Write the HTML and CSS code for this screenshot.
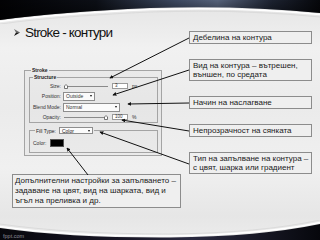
FILE: index.html
```html
<!DOCTYPE html>
<html lang="bg">
<head>
<meta charset="utf-8">
<title>Stroke - контури</title>
<link rel="stylesheet" href="styles.css">
</head>
<body>
<div class="slide">
  <svg class="band band-top" width="320" height="24" viewBox="0 0 320 24">
    <defs>
      <linearGradient id="gTop" x1="0" y1="0" x2="1" y2="0">
        <stop offset="0" stop-color="#020204"/>
        <stop offset="0.3" stop-color="#0c0f16"/>
        <stop offset="0.55" stop-color="#3c4860"/>
        <stop offset="0.68" stop-color="#56627a"/>
        <stop offset="0.85" stop-color="#1c2230"/>
        <stop offset="1" stop-color="#06070b"/>
      </linearGradient>
      <linearGradient id="gTopShade" x1="0" y1="0" x2="0" y2="1">
        <stop offset="0" stop-color="#000" stop-opacity="0"/>
        <stop offset="1" stop-color="#000" stop-opacity="0.6"/>
      </linearGradient>
    </defs>
    <path d="M0 0H320V13Q240 5 150 8Q60 12 0 20Z" fill="url(#gTop)"/>
    <path d="M0 0H320V13Q240 5 150 8Q60 12 0 20Z" fill="url(#gTopShade)"/>
    <path d="M0 21.5Q60 13.5 150 9.5Q240 6.5 320 14.5" fill="none" stroke="#ffffff" stroke-width="1.6"/>
    <path d="M0 24Q60 16 150 12Q240 9 320 17" fill="none" stroke="#d6d6d6" stroke-width="1.2" opacity="0.7"/>
  </svg>

  <svg class="band band-bottom" width="320" height="20" viewBox="0 220 320 20">
    <defs>
      <linearGradient id="gBot" x1="0" y1="0" x2="1" y2="0">
        <stop offset="0" stop-color="#07070c"/>
        <stop offset="0.4" stop-color="#1a1828"/>
        <stop offset="0.6" stop-color="#2a2a40"/>
        <stop offset="1" stop-color="#06070c"/>
      </linearGradient>
    </defs>
    <path d="M0 224Q70 234 170 234Q260 233 320 220" fill="none" stroke="#d4d4d4" stroke-width="1" opacity="0.7"/>
    <path d="M0 226.5Q70 236.5 170 236Q260 235 320 222.5" fill="none" stroke="#ffffff" stroke-width="1.6"/>
    <path d="M0 228Q70 238 170 237.5Q260 236.5 320 224V240H0Z" fill="url(#gBot)"/>
    <text class="brand" x="3" y="237.5">fppt.com</text>
  </svg>

  <div class="layout">
    <div class="left">
      <h1 class="title">
        <svg class="bullet" width="6" height="7" viewBox="0 0 6 7">
          <path d="M0 0L6 3.5L2 3.5Z" fill="#6a6a6a"/>
          <path d="M0 7L6 3.5L2 3.5Z" fill="#111"/>
        </svg>
        <span>Stroke - контури</span>
      </h1>

      <fieldset class="grp grp-stroke">
        <legend>Stroke</legend>
        <fieldset class="grp grp-structure">
          <legend>Structure</legend>
          <div class="rows">
            <span class="lbl">Size:</span>
            <div class="ctl">
              <span class="slider"><svg class="thumb" style="left:0%" width="4" height="5" viewBox="0 0 4 5"><path d="M0.5 4.5V2L2 0.5L3.5 2V4.5Z" fill="#fff" stroke="#555" stroke-width="0.8"/></svg></span>
              <span class="num">3</span><span class="unit">px</span>
            </div>
            <span class="lbl">Position:</span>
            <div class="ctl"><span class="select sel-pos">Outside</span></div>
            <span class="lbl">Blend Mode:</span>
            <div class="ctl"><span class="select sel-blend">Normal</span></div>
            <span class="lbl">Opacity:</span>
            <div class="ctl">
              <span class="slider"><svg class="thumb" style="left:92%" width="4" height="5" viewBox="0 0 4 5"><path d="M0.5 4.5V2L2 0.5L3.5 2V4.5Z" fill="#fff" stroke="#555" stroke-width="0.8"/></svg></span>
              <span class="num">100</span><span class="unit">%</span>
            </div>
          </div>
        </fieldset>
        <fieldset class="grp grp-fill">
          <legend><span class="lbl-inline">Fill Type:</span><span class="select sel-fill">Color</span></legend>
          <div class="color-row"><span class="lbl-inline">Color:</span><span class="swatch"></span></div>
        </fieldset>
      </fieldset>

      <div class="box note">Допълнителни настройки за запълването –<br>задаване на цвят, вид на шарката, вид и<br>ъгъл на преливка и др.</div>
    </div>

    <div class="right">
      <div class="box">Дебелина на контура</div>
      <div class="box">Вид на контура – вътрешен,<br>външен, по средата</div>
      <div class="box">Начин на наслагване</div>
      <div class="box">Непрозрачност на сянката</div>
      <div class="box">Тип на запълване на контура –<br>с цвят, шарка или градиент</div>
    </div>
  </div>

  <svg class="links" width="320" height="240" viewBox="0 0 320 240">
    <defs>
      <marker id="ah" viewBox="0 0 6 6" refX="5" refY="3" markerWidth="4" markerHeight="4" orient="auto">
        <path d="M0 0L6 3L0 6Z" fill="#111"/>
      </marker>
    </defs>
    <g stroke="#111" stroke-width="1" marker-end="url(#ah)">
      <line x1="189" y1="38" x2="110" y2="78"/>
      <line x1="189" y1="70" x2="113" y2="95"/>
      <line x1="189" y1="103" x2="128" y2="104"/>
      <line x1="189" y1="131" x2="122" y2="120"/>
      <line x1="189" y1="164" x2="100" y2="132"/>
      <line x1="88" y1="175" x2="67" y2="148"/>
    </g>
  </svg>
</div>
</body>
</html>
```

FILE: styles.css
```css
* {
  box-sizing: border-box;
  margin: 0;
  padding: 0;
}

html, body {
  width: 320px;
  height: 240px;
  overflow: hidden;
}

body {
  font-family: "Liberation Sans", Arial, sans-serif;
  color: #1a1a1a;
}

.slide {
  position: relative;
  width: 320px;
  height: 240px;
  overflow: hidden;
  background: linear-gradient(to bottom, #e4e4e4 0%, #f1f1f1 20%, #ebebeb 45%, #f0f0f0 70%, #e6e6e6 90%, #ececec 100%);
}

.band {
  position: absolute;
  left: 0;
  display: block;
}

.band-top { top: 0; }
.band-bottom { bottom: 0; }

.brand {
  font-family: "Liberation Sans", Arial, sans-serif;
  font-size: 5.5px;
  fill: #8e8e98;
}

.links {
  position: absolute;
  left: 0;
  top: 0;
  pointer-events: none;
}

.layout {
  position: relative;
  display: grid;
  grid-template-columns: 189px 123px;
  height: 240px;
}

.left {
  display: flex;
  flex-direction: column;
  align-items: flex-start;
}

.title {
  margin: 24px 0 0 14px;
  height: 16px;
  display: flex;
  align-items: center;
  gap: 5px;
  font-family: "Liberation Sans", sans-serif;
  font-weight: normal;
  font-size: 13.5px;
  letter-spacing: -0.8px;
  color: #111;
}

.bullet { display: block; }

/* Photoshop-like dialog */
.grp {
  border: 1px solid #a4a4a4;
  min-width: 0;
  font-size: 5px;
  line-height: 6px;
  color: #333;
}

.grp legend {
  font-weight: bold;
  padding: 0 1px;
  color: #222;
}

.grp-stroke {
  margin: 27px 0 0 24px;
  width: 138px;
  padding: 1px 3px 2px 4px;
  background: rgba(0, 0, 0, 0.02);
}

.grp-stroke > legend { margin-left: 2px; }

.grp-structure {
  padding: 0 2px 1px 0;
}

.grp-structure > legend { margin-left: 3px; }

.rows {
  display: grid;
  grid-template-columns: 31px 1fr;
  grid-template-rows: 9px 10px 10px 8px;
  column-gap: 2px;
  row-gap: 1px;
  margin-top: 1px;
}

.lbl {
  text-align: right;
  align-self: center;
  white-space: nowrap;
}

.ctl {
  display: flex;
  align-items: center;
}

.slider {
  position: relative;
  width: 44px;
  height: 6px;
  margin-left: 1px;
}

.slider::before {
  content: "";
  position: absolute;
  left: 0;
  right: 0;
  top: 3px;
  height: 1px;
  background: #8a8a8a;
}

.thumb {
  position: absolute;
  top: 1px;
  display: block;
}

.num {
  margin-left: 4px;
  width: 16px;
  height: 6px;
  background: #fff;
  border: 1px solid #9a9a9a;
  padding-left: 2px;
  line-height: 4px;
  font-size: 4.5px;
}

.unit {
  margin-left: 4px;
}

.select {
  display: inline-flex;
  align-items: center;
  justify-content: space-between;
  height: 9px;
  padding: 0 2px;
  background: #fbfbfb;
  border: 1px solid #8d8d8d;
  font-weight: normal;
  white-space: nowrap;
}

.select::after {
  content: "";
  border-left: 1.5px solid transparent;
  border-right: 1.5px solid transparent;
  border-top: 2px solid #111;
}

.sel-pos { width: 32px; }
.sel-blend { width: 57px; }
.sel-fill { width: 34px; height: 7px; margin-left: 3px; }

.grp-fill {
  margin-top: 3px;
  padding: 0 0 5px 0;
}

.grp-fill > legend {
  margin-left: 5px;
  display: flex;
  align-items: center;
  font-weight: normal;
  height: 9px;
}

.lbl-inline {
  white-space: nowrap;
}

.color-row {
  display: flex;
  align-items: center;
  gap: 4px;
  padding: 4px 0 0 3px;
}

.swatch {
  width: 14px;
  height: 8px;
  background: #000;
  border: 1px solid #555;
}

/* Callout boxes */
.box {
  border: 1px solid #8c8c8c;
  background: #efefef;
  padding: 1px 3px;
  font-size: 8px;
  line-height: 9px;
  color: #1a1a1a;
  white-space: nowrap;
}

.note {
  margin: auto 0 32px 12px;
  width: 169px;
  line-height: 10px;
  padding: 1px 2px;
}

.right {
  display: flex;
  flex-direction: column;
  gap: 15px;
  padding-top: 31px;
}
```
